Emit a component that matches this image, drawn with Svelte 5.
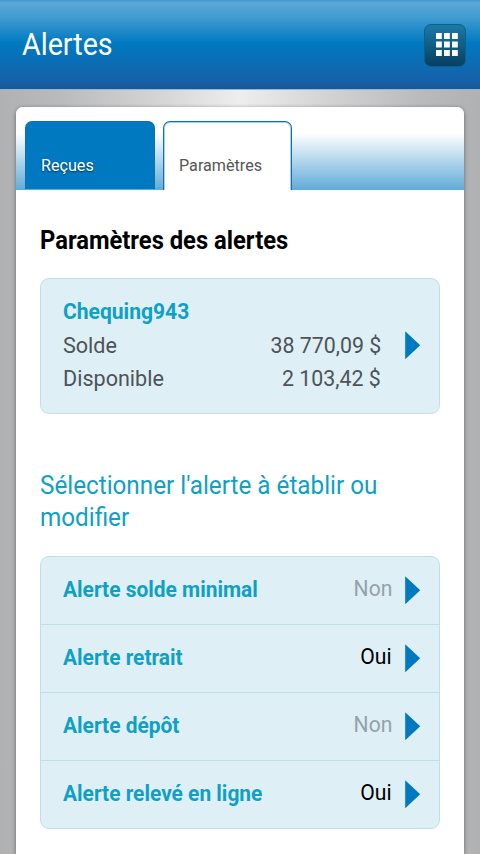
<script>
  let activeTab = 'settings';

  const tabs = [
    { id: 'received', label: 'Reçues' },
    { id: 'settings', label: 'Paramètres' }
  ];

  const account = {
    name: 'Chequing943',
    balance: '38 770,09 $',
    available: '2 103,42 $'
  };

  const alerts = [
    { id: 'minimal', label: 'Alerte solde minimal', enabled: false },
    { id: 'retrait', label: 'Alerte retrait', enabled: true },
    { id: 'depot', label: 'Alerte dépôt', enabled: false },
    { id: 'releve', label: 'Alerte relevé en ligne', enabled: true }
  ];
</script>

{#snippet arrow()}
  <svg class="arrow" width="16" height="29" viewBox="0 0 16 29" aria-hidden="true">
    <path d="M0.2 0.3 L15.2 14.3 L0.2 28.3 Z" fill="#0079c1" />
  </svg>
{/snippet}

<div class="page">
  <header>
    <h1>Alertes</h1>
    <button class="menu" aria-label="Menu">
      <svg width="22" height="23" viewBox="0 0 22 23" fill="#fff">
        {#each [0, 8, 16] as x}
          {#each [0, 8.5, 17] as y}
            <rect {x} {y} width="5.8" height="6" />
          {/each}
        {/each}
      </svg>
    </button>
  </header>

  <main>
    <nav>
      {#each tabs as tab (tab.id)}
        <button class="tab" class:active={activeTab === tab.id}><span>{tab.label}</span></button>
      {/each}
    </nav>

    <section>
      <h2>Paramètres des alertes</h2>

      <div class="box account">
        <div class="details">
          <strong class="name">{account.name}</strong>
          <div class="line"><span>Solde</span><span class="amount">{account.balance}</span></div>
          <div class="line"><span>Disponible</span><span class="amount">{account.available}</span></div>
        </div>
        {@render arrow()}
      </div>

      <h3>Sélectionner l'alerte à établir ou modifier</h3>

      <ul class="box">
        {#each alerts as alert (alert.id)}
          <li>
            <strong class="name">{alert.label}</strong>
            <span class="state" class:on={alert.enabled}>{alert.enabled ? 'Oui' : 'Non'}</span>
            {@render arrow()}
          </li>
        {/each}
      </ul>
    </section>
  </main>
</div>

<style>
  :global(body) {
    margin: 0;
  }

  .page {
    height: 100vh;
    overflow: hidden;
    display: flex;
    flex-direction: column;
    box-sizing: border-box;
    font-family: Roboto, 'Liberation Sans', sans-serif;
    background: linear-gradient(to right, #b0b1b3 0%, #b9babb 12%, #d3d3d4 32%, #eeeeee 50%, #d3d3d4 68%, #b9babb 88%, #b0b1b3 100%);
  }

  /* slightly condensed lettering */
  h1,
  h2,
  h3,
  .tab span,
  .name,
  .line span,
  .state {
    transform: scaleX(0.95);
    transform-origin: left center;
  }

  header {
    flex: none;
    height: 90px;
    box-sizing: border-box;
    padding: 0 14px 0 22px;
    display: flex;
    align-items: center;
    justify-content: space-between;
    background: linear-gradient(#429acb 0, #5aa8d6 3px, #3f9bd0 18px, #0079c1 43px, #1660a8 82px, #195997 88px);
    border-bottom: 1px solid #8fb6d8;
  }

  h1 {
    margin: 1px 0 0;
    font-size: 31.5px;
    line-height: 40px;
    font-weight: 400;
    color: #fff;
    transform: scaleX(0.91);
  }

  .menu {
    width: 42px;
    height: 43px;
    margin-top: 1px;
    padding: 0 0 0 3px;
    display: flex;
    align-items: center;
    justify-content: center;
    border: 1px solid #0e5f8c;
    border-radius: 7px;
    background: linear-gradient(#1b7aa6, #063f61);
  }

  .menu svg {
    margin-top: -2px;
  }

  main {
    flex: 1;
    margin: 17px 16px 0;
    background: #fff;
    border-radius: 7px 7px 0 0;
    box-shadow: 0 1px 4px rgba(0, 0, 0, 0.45);
  }

  nav {
    height: 83px;
    box-sizing: border-box;
    padding: 14px 9px 0;
    display: flex;
    gap: 8px;
    border-radius: 7px 7px 0 0;
    background: linear-gradient(#fff 26px, #5fabd8 83px);
  }

  .tab {
    width: 130px;
    height: 68px;
    box-sizing: border-box;
    padding: 19px 15px 0;
    border: 1px solid #0f6fb3;
    border-bottom: none;
    border-radius: 7px 7px 0 0;
    background: #0079c1;
    color: #fff;
    font-family: inherit;
    font-size: 17px;
    line-height: 22px;
    text-align: left;
    text-shadow: 0 1px 2px rgba(0, 0, 0, 0.6);
  }

  .tab span {
    display: inline-block;
  }

  .tab.active {
    width: 129px;
    height: 69px;
    padding-top: 18px;
    background: #fff;
    box-shadow: inset 0 1px 0 #a9d0e8, inset 1px 0 0 #a9d0e8, inset -1px 0 0 #a9d0e8;
    color: #555;
    text-shadow: none;
  }

  section {
    padding: 0 24px;
  }

  h2 {
    margin: 0;
    padding: 35px 0 21px;
    font-size: 25px;
    line-height: 32px;
    font-weight: 700;
    color: #000;
  }

  h3 {
    margin: 56px 0 22px;
    font-size: 25px;
    line-height: 32px;
    font-weight: 400;
    color: #0fa0c5;
    transform: scaleX(0.97);
  }

  .box {
    margin: 0;
    padding: 0;
    border: 1px solid #bfe0e8;
    border-radius: 9px;
    background: #dfeff6;
    font-size: 22px;
    list-style: none;
  }

  .name {
    display: inline-block;
    font-size: 22.5px;
    font-weight: 700;
    color: #0fa0c5;
    transform: scaleX(0.936);
  }

  .account {
    height: 136px;
    box-sizing: border-box;
    padding: 0 18px 2px 22px;
    display: flex;
    align-items: center;
    gap: 24px;
    color: #4d5356;
  }

  .details {
    flex: 1;
    padding-top: 1px;
    line-height: 33.5px;
  }

  .line {
    display: flex;
    justify-content: space-between;
  }

  .line span {
    transform: scaleX(0.98);
  }

  .line .amount {
    transform: scaleX(0.97);
    transform-origin: right center;
  }

  li {
    height: 67px;
    padding: 0 18px 0 22px;
    display: flex;
    align-items: center;
  }

  li .name {
    padding-bottom: 3px;
    transform: scaleX(0.93);
  }

  li + li {
    border-top: 1px solid #bfe0e8;
  }

  .state {
    margin-left: auto;
    margin-right: 13px;
    padding-bottom: 5px;
    color: #94a2a9;
    transform: scaleX(0.96);
    transform-origin: right center;
  }

  .state.on {
    color: #000;
  }

  .arrow {
    flex: none;
  }
</style>
